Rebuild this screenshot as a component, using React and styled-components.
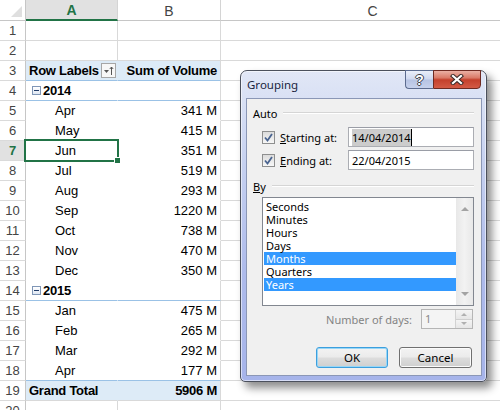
import React from 'react';
import styled, { createGlobalStyle } from 'styled-components';

const GlobalStyle = createGlobalStyle`
  html, body {
    margin: 0;
    padding: 0;
    background: #fff;
  }
  body {
    overflow: hidden;
  }
`;

const lineColors = {
  grid: '#d9d9d9',
  blue: '#9bc2e6',
  none: 'transparent',
};

const Sheet = styled.div`
  position: relative;
  width: 500px;
  height: 410px;
  overflow: hidden;
  font-family: 'Liberation Sans', Arial, sans-serif;
  font-size: 13px;
  color: #000;
`;

const Row = styled.div`
  display: grid;
  grid-template-columns: 26px 92px 103px 304px;
  height: ${(p) => p.$height || 20}px;
`;

const Corner = styled.div`
  position: relative;
  box-sizing: border-box;
  border-right: 1px solid #c6c6c6;
  border-bottom: 1px solid #c6c6c6;
  background: #fff;

  &::after {
    content: '';
    position: absolute;
    right: 3px;
    bottom: 3px;
    border-left: 11px solid transparent;
    border-bottom: 11px solid #dfdfdf;
  }
`;

const ColHead = styled.div`
  box-sizing: border-box;
  display: flex;
  align-items: center;
  justify-content: center;
  padding-top: 1px;
  background: ${(p) => (p.$active ? '#e1e1e1' : '#fff')};
  color: ${(p) => (p.$active ? '#217346' : '#444')};
  font-weight: ${(p) => (p.$active ? 700 : 400)};
  font-size: 14px;
  border-right: 1px solid #d4d4d4;
  border-bottom: ${(p) => (p.$active ? '2px solid #217346' : '1px solid #c6c6c6')};
`;

const RowNum = styled.div`
  box-sizing: border-box;
  display: flex;
  align-items: center;
  justify-content: center;
  font-size: 13px;
  background: ${(p) => (p.$active ? '#e1e1e1' : '#fff')};
  color: ${(p) => (p.$active ? '#217346' : '#444')};
  font-weight: ${(p) => (p.$active ? 700 : 400)};
  border-right: 1px solid #c6c6c6;
  border-bottom: 1px solid #dadada;
`;

const Cell = styled.div`
  position: relative;
  box-sizing: border-box;
  display: flex;
  align-items: center;
  justify-content: ${(p) => (p.$right ? 'flex-end' : 'flex-start')};
  padding-left: ${(p) => (p.$indent != null ? p.$indent : 3)}px;
  padding-right: 3px;
  background: ${(p) => (p.$fill ? '#ddebf7' : '#fff')};
  font-weight: ${(p) => (p.$bold ? 700 : 400)};
  letter-spacing: ${(p) => (p.$bold ? '-0.25px' : '0')};
  border-right: 1px solid ${(p) => (p.$gridRight ? lineColors.grid : 'transparent')};
  border-bottom: 1px solid ${(p) => lineColors[p.$bottom || 'grid']};
  white-space: nowrap;

  ${(p) =>
    p.$selected &&
    `
    &::after {
      content: '';
      position: absolute;
      left: -2px;
      top: -2px;
      right: -2px;
      bottom: -2px;
      border: 2px solid #217346;
      z-index: 2;
    }
    &::before {
      content: '';
      position: absolute;
      right: -4px;
      bottom: -4px;
      width: 5px;
      height: 5px;
      background: #217346;
      border: 1px solid #fff;
      z-index: 3;
    }
  `}
`;

const FilterButton = styled.span`
  margin-left: auto;
  margin-right: -2px;
  box-sizing: border-box;
  width: 15px;
  height: 15px;
  border: 1px solid #a6a6a6;
  background: #f7f7f7;
  display: flex;
  align-items: center;
  justify-content: center;
`;

const Collapse = styled.span`
  position: relative;
  box-sizing: border-box;
  width: 9px;
  height: 9px;
  margin: 0 2px 0 3px;
  border: 1px solid #7f96b6;
  background: linear-gradient(#ffffff, #dfe7f3);

  &::after {
    content: '';
    position: absolute;
    left: 1px;
    right: 1px;
    top: 3px;
    height: 1px;
    background: #1f3a66;
  }
`;

/* ---------- dialog ---------- */

const Dialog = styled.div`
  position: absolute;
  left: 240px;
  top: 70px;
  width: 247px;
  height: 312px;
  box-sizing: border-box;
  border: 1px solid #4b505c;
  border-radius: 7px 7px 5px 5px;
  background: linear-gradient(180deg, #e1e7f6 0%, #c6d1f0 30%, #aebbeb 65%, #a6b4ea 100%);
  box-shadow: inset 0 0 0 1px rgba(255, 255, 255, 0.55), 5px 6px 9px rgba(0, 0, 0, 0.45);
  padding: 0 4px 5px 5px;
  display: flex;
  flex-direction: column;
  font-family: 'Noto Sans', 'Liberation Sans', sans-serif;
  font-size: 11px;
  color: #000;
`;

const TitleBar = styled.div`
  display: flex;
  align-items: flex-start;
  height: 27px;
  flex: none;
`;

const Title = styled.span`
  margin: 6px 0 0 1px;
  color: #1a2540;
  font-size: 11.5px;
`;

const CaptionButtons = styled.div`
  display: flex;
  margin: -1px 1px 0 auto;
`;

const HelpButton = styled.div`
  box-sizing: border-box;
  width: 28px;
  height: 19px;
  border: 1px solid #5c6b8e;
  border-right: none;
  border-radius: 0 0 0 4px;
  background: linear-gradient(180deg, #e9eef9 0%, #cfd8ef 48%, #b6c3e3 52%, #c6d1ec 100%);
  display: flex;
  align-items: center;
  justify-content: center;
  color: #fff;
  font-family: 'Liberation Sans', Arial, sans-serif;
  font-weight: 700;
  font-size: 14px;
  text-shadow: 1px 0 0 #3b3f4a, -1px 0 0 #3b3f4a, 0 1px 0 #3b3f4a, 0 -1px 0 #3b3f4a;
`;

const CloseButton = styled.div`
  box-sizing: border-box;
  width: 48px;
  height: 19px;
  border: 1px solid #6e2a22;
  border-radius: 0 0 4px 0;
  background: linear-gradient(180deg, #eab0a4 0%, #d97a68 40%, #c4402c 52%, #d35a45 100%);
  display: flex;
  align-items: center;
  justify-content: center;
`;

const Panel = styled.div`
  flex: 1;
  box-sizing: border-box;
  background: #f0f0f0;
  border: 1px solid #8b97b6;
  padding: 7px 7px 0 6px;
  display: flex;
  flex-direction: column;
`;

const GroupHead = styled.div`
  display: flex;
  align-items: center;
  height: 14px;
  margin-top: ${(p) => p.$top || 0}px;

  &::after {
    content: '';
    flex: 1;
    margin-left: 6px;
    border-top: 1px solid #d5d5d5;
    border-bottom: 1px solid #fff;
  }
`;

const Key = styled.span`
  text-decoration: underline;
`;

const FieldRow = styled.div`
  display: flex;
  align-items: center;
  height: 20px;
  margin-top: ${(p) => p.$top || 0}px;
  padding-left: 9px;
`;

const Check = styled.span`
  box-sizing: border-box;
  width: 13px;
  height: 13px;
  margin-right: 5px;
  border: 1px solid #8e8f8f;
  background: linear-gradient(#dcdcdc, #f7f7f7);
  display: flex;
  align-items: center;
  justify-content: center;
`;

const TextBox = styled.div`
  margin-left: auto;
  box-sizing: border-box;
  width: 126px;
  height: 20px;
  border: 1px solid #abadb3;
  border-top-color: #9a9da6;
  background: #fff;
  display: flex;
  align-items: center;
  padding-left: 3px;
`;

const Selected = styled.span`
  background: #cccccc;
  padding: 1px 0;
  border-right: 1px solid #000;
`;

const ListBox = styled.div`
  margin: 4px 0 0 9px;
  height: 109px;
  box-sizing: border-box;
  border: 1px solid #828790;
  background: #fff;
  display: flex;
`;

const Items = styled.div`
  flex: 1;
  padding: 2px 0 0 1px;
`;

const Item = styled.div`
  height: 13px;
  line-height: 13px;
  padding-left: 2px;
  background: ${(p) => (p.$selected ? '#3399ff' : 'transparent')};
  color: ${(p) => (p.$selected ? '#fff' : '#000')};
`;

const ScrollBar = styled.div`
  width: 17px;
  background: linear-gradient(90deg, #e8e8e8, #f2f2f2 50%, #e8e8e8);
  display: flex;
  flex-direction: column;
  align-items: center;
  justify-content: space-between;
  padding: 9px 0 9px;
  box-sizing: border-box;
`;

const Arrow = styled.span`
  width: 0;
  height: 0;
  border-left: 4px solid transparent;
  border-right: 4px solid transparent;
  ${(p) => (p.$down ? 'border-top: 4px solid #a3a3a3;' : 'border-bottom: 4px solid #a3a3a3;')}
`;

const DaysRow = styled.div`
  display: flex;
  align-items: center;
  justify-content: flex-end;
  margin-top: 3px;
  height: 20px;
  color: #838383;
`;

const SpinBox = styled.div`
  margin-left: 9px;
  margin-right: 1px;
  box-sizing: border-box;
  width: 52px;
  height: 20px;
  border: 1px solid #b5b5b5;
  background: #f4f4f4;
  display: flex;
`;

const SpinValue = styled.span`
  flex: 1;
  padding-left: 3px;
  line-height: 18px;
  color: #8a8a8a;
`;

const SpinButtons = styled.div`
  width: 16px;
  display: flex;
  flex-direction: column;
  border-left: 1px solid #d2d2d2;
`;

const SpinHalf = styled.span`
  flex: 1;
  display: flex;
  align-items: center;
  justify-content: center;
  background: linear-gradient(#f4f4f4, #e6e6e6);
  border-bottom: ${(p) => (p.$top ? '1px solid #cfcfcf' : 'none')};
`;

const SmallArrow = styled.span`
  width: 0;
  height: 0;
  border-left: 3px solid transparent;
  border-right: 3px solid transparent;
  ${(p) => (p.$down ? 'border-top: 3px solid #b0b0b0;' : 'border-bottom: 3px solid #b0b0b0;')}
`;

const ButtonRow = styled.div`
  display: flex;
  justify-content: flex-end;
  gap: 11px;
  margin: 18px 2px 0 0;
`;

const Button = styled.div`
  box-sizing: border-box;
  width: ${(p) => p.$w}px;
  height: 21px;
  border-radius: 3px;
  border: 1px solid ${(p) => (p.$default ? '#3c9fde' : '#707070')};
  box-shadow: inset 0 0 0 1px ${(p) => (p.$default ? '#98d6f6' : '#fbfbfb')};
  background: linear-gradient(180deg, #f3f3f3 0%, #ebebeb 48%, #dddddd 52%, #cfcfcf 100%);
  display: flex;
  align-items: center;
  justify-content: center;
  font-size: 11.5px;
`;

const data = [
  { n: 1, kind: 'blank' },
  { n: 2, kind: 'blank' },
  { n: 3, kind: 'head', a: 'Row Labels', b: 'Sum of Volume' },
  { n: 4, kind: 'group', a: '2014' },
  { n: 5, kind: 'item', a: 'Apr', b: '341 M' },
  { n: 6, kind: 'item', a: 'May', b: '415 M' },
  { n: 7, kind: 'item', a: 'Jun', b: '351 M', selected: true },
  { n: 8, kind: 'item', a: 'Jul', b: '519 M' },
  { n: 9, kind: 'item', a: 'Aug', b: '293 M' },
  { n: 10, kind: 'item', a: 'Sep', b: '1220 M' },
  { n: 11, kind: 'item', a: 'Oct', b: '738 M' },
  { n: 12, kind: 'item', a: 'Nov', b: '470 M' },
  { n: 13, kind: 'item', a: 'Dec', b: '350 M' },
  { n: 14, kind: 'group', a: '2015' },
  { n: 15, kind: 'item', a: 'Jan', b: '475 M' },
  { n: 16, kind: 'item', a: 'Feb', b: '265 M' },
  { n: 17, kind: 'item', a: 'Mar', b: '292 M' },
  { n: 18, kind: 'item', a: 'Apr', b: '177 M', last: true },
  { n: 19, kind: 'total', a: 'Grand Total', b: '5906 M' },
  { n: 20, kind: 'blank' },
];

const units = ['Seconds', 'Minutes', 'Hours', 'Days', 'Months', 'Quarters', 'Years'];
const picked = ['Months', 'Years'];

function SortIcon() {
  return (
    <svg width="11" height="11" viewBox="0 0 11 11">
      <path d="M1 5 L6 5 L3.5 8 Z" fill="#555" />
      <path d="M8.5 2 V10" stroke="#555" strokeWidth="1" />
      <path d="M6.8 4 L8.5 2 L10.2 4" stroke="#555" strokeWidth="1" fill="none" />
    </svg>
  );
}

function CheckMark() {
  return (
    <svg width="9" height="9" viewBox="0 0 9 9">
      <path d="M1 4.5 L3.5 7.5 L8 1" stroke="#4a6490" strokeWidth="1.8" fill="none" />
    </svg>
  );
}

function CloseGlyph() {
  return (
    <svg width="14" height="11" viewBox="0 0 14 11">
      <path d="M3 2 L11 9 M11 2 L3 9" stroke="#3a2a28" strokeWidth="4.2" strokeLinecap="square" />
      <path d="M3 2 L11 9 M11 2 L3 9" stroke="#fff" strokeWidth="2.2" strokeLinecap="square" />
    </svg>
  );
}

function SheetRow({ row }) {
  const { kind } = row;
  if (kind === 'blank') {
    return (
      <Row>
        <RowNum>{row.n}</RowNum>
        <Cell $gridRight />
        <Cell $gridRight />
        <Cell />
      </Row>
    );
  }
  const fill = kind === 'head' || kind === 'total';
  const bold = kind !== 'item';
  let bottom = 'none';
  if (kind === 'head' || kind === 'group' || row.last) bottom = 'blue';
  if (kind === 'total') bottom = 'grid';

  return (
    <Row>
      <RowNum $active={row.selected}>{row.n}</RowNum>
      <Cell
        $fill={fill}
        $bold={bold}
        $bottom={bottom}
        $indent={kind === 'item' ? 29 : 3}
        $selected={row.selected}
      >
        {kind === 'group' && <Collapse />}
        {row.a}
        {kind === 'head' && (
          <FilterButton>
            <SortIcon />
          </FilterButton>
        )}
      </Cell>
      <Cell $fill={fill} $bold={bold} $bottom={bottom} $right $gridRight>
        {row.b}
      </Cell>
      <Cell />
    </Row>
  );
}

export default function App() {
  return (
    <Sheet>
      <GlobalStyle />
      <Row $height={21}>
        <Corner />
        <ColHead $active>A</ColHead>
        <ColHead>B</ColHead>
        <ColHead>C</ColHead>
      </Row>
      {data.map((row) => (
        <SheetRow key={row.n} row={row} />
      ))}

      <Dialog>
        <TitleBar>
          <Title>Grouping</Title>
          <CaptionButtons>
            <HelpButton>?</HelpButton>
            <CloseButton>
              <CloseGlyph />
            </CloseButton>
          </CaptionButtons>
        </TitleBar>
        <Panel>
          <GroupHead>Auto</GroupHead>
          <FieldRow $top={7}>
            <Check>
              <CheckMark />
            </Check>
            <span>
              <Key>S</Key>tarting at:
            </span>
            <TextBox>
              <Selected>14/04/2014</Selected>
            </TextBox>
          </FieldRow>
          <FieldRow $top={3}>
            <Check>
              <CheckMark />
            </Check>
            <span>
              <Key>E</Key>nding at:
            </span>
            <TextBox>22/04/2015</TextBox>
          </FieldRow>
          <GroupHead $top={9}>
            <span>
              <Key>B</Key>y
            </span>
          </GroupHead>
          <ListBox>
            <Items>
              {units.map((u) => (
                <Item key={u} $selected={picked.includes(u)}>
                  {u}
                </Item>
              ))}
            </Items>
            <ScrollBar>
              <Arrow />
              <Arrow $down />
            </ScrollBar>
          </ListBox>
          <DaysRow>
            Number of days:
            <SpinBox>
              <SpinValue>1</SpinValue>
              <SpinButtons>
                <SpinHalf $top>
                  <SmallArrow />
                </SpinHalf>
                <SpinHalf>
                  <SmallArrow $down />
                </SpinHalf>
              </SpinButtons>
            </SpinBox>
          </DaysRow>
          <ButtonRow>
            <Button $w={72} $default>
              OK
            </Button>
            <Button $w={73}>Cancel</Button>
          </ButtonRow>
        </Panel>
      </Dialog>
    </Sheet>
  );
}
